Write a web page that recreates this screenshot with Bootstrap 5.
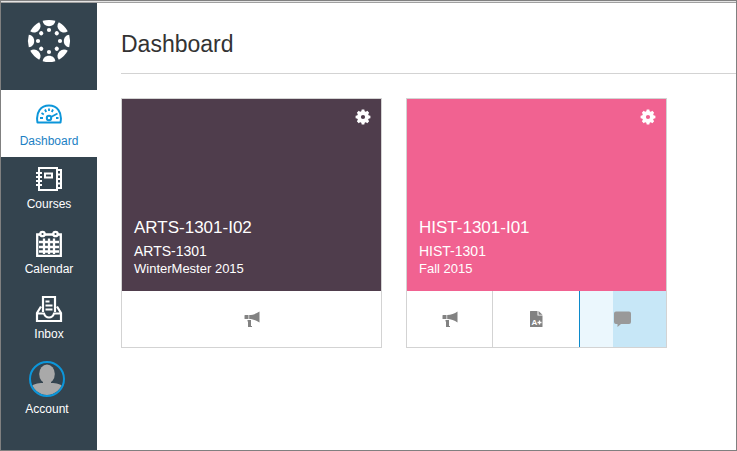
<!DOCTYPE html>
<html lang="en">
<head>
<meta charset="utf-8">
<meta name="viewport" content="width=device-width, initial-scale=1">
<title>Dashboard</title>
<link href="https://cdn.jsdelivr.net/npm/bootstrap@5.3.0/dist/css/bootstrap.min.css" rel="stylesheet">
<style>
body { font-family: "Liberation Sans", Arial, sans-serif; font-size: 12px; line-height: 16px; color: #333; }
.app-frame { border: 1px solid #808080; }
.top-rule { height: 2px; background: #e4e4e4; border-bottom: 1px solid #a0a0a0; }
.side-nav { width: 96px; background: #34444f; }
.brand-link { height: 87px; padding-bottom: 12px; }
.side-link { color: #fff; padding: 8px 0 10px; gap: 3px; }
.side-link:hover { color: #fff; }
.side-link.active { background: #fff; color: #1c7fc4; padding: 10px 0 8px; gap: 5px; }
.account-link { padding: 9px 4px 10px 0; gap: 4px; }
.side-icon { width: 28px; height: 28px; }
.avatar-icon { width: 36px; height: 36px; }
.page-main { padding-left: 24px; }
.page-title { font-size: 23px; line-height: 30px; padding: 26px 0 14px; border-bottom: 1px solid #d3d3d3; margin-bottom: 24px; color: #333; }
.course-list { gap: 24px; }
.course-card { width: 261px; border: 1px solid #d3d3d3; }
.course-hero { height: 192px; padding: 10px 10px 14px 12px; }
.plum { background: #4f3d4c; }
.pink { background: #f16291; }
.course-name { font-size: 17px; line-height: 22px; margin-bottom: 3px; }
.course-code { font-size: 14px; line-height: 18px; }
.course-term { font-size: 13px; line-height: 17px; }
.gear-btn { width: 16px; height: 16px; }
.course-action { height: 56px; color: #828282; }
.course-action + .course-action { border-left: 1px solid #d3d3d3; }
.course-action.current { border-left-color: #0c8acb; color: #999; background: linear-gradient(90deg, #ebf7fd 38%, #c7e7f7 38%); }
</style>
<script src="https://cdn.jsdelivr.net/npm/bootstrap@5.3.0/dist/js/bootstrap.bundle.min.js"></script>
</head>
<body>
<svg class="d-none" aria-hidden="true">
  <symbol id="gear" viewBox="0 0 16 16">
    <circle cx="8" cy="8" r="4" fill="none" stroke="#fff" stroke-width="3.8"/>
    <g fill="#fff"><path id="tooth" d="M6.200 3 6.700.6h2.600L9.800 3zM6.200 13l.5 2.400h2.600l.5-2.400z"/><use href="#tooth" transform="rotate(45 8 8)"/><use href="#tooth" transform="rotate(90 8 8)"/><use href="#tooth" transform="rotate(135 8 8)"/></g>
  </symbol>
  <symbol id="horn" viewBox="0 0 16 16"><path fill="currentColor" d="M.5 4.500q0-.5.5-.5h3.500v4H1q-.5 0-.5-.5zM5.200 4C9 4 12.500 2.500 15.500.5v11C12.500 9.500 9 8 5.200 8zM3.500 9H7v6h1v1H4v-5.500h-.5z"/></symbol>
</svg>
<div class="app-frame d-flex flex-column min-vh-100">
  <div class="top-rule"></div>
  <div class="d-flex flex-grow-1">
    <nav class="side-nav flex-shrink-0 d-flex flex-column" aria-label="Main">
      <a href="#" class="brand-link d-flex align-items-center justify-content-center" aria-label="Home">
        <svg width="44" height="44" viewBox="0 0 44 44" fill="#fff">
          <g id="lobes"><path d="M15.700 1.800Q22 0 28.300 1.800C28 5 25.500 7.200 22 7.200S16 5 15.700 1.800z"/><circle cx="22" cy="11" r="2.100"/></g>
          <use href="#lobes" transform="rotate(45 22 22)"/><use href="#lobes" transform="rotate(90 22 22)"/><use href="#lobes" transform="rotate(135 22 22)"/><use href="#lobes" transform="rotate(180 22 22)"/><use href="#lobes" transform="rotate(225 22 22)"/><use href="#lobes" transform="rotate(270 22 22)"/><use href="#lobes" transform="rotate(315 22 22)"/>
        </svg>
      </a>
      <a href="#" class="side-link active d-flex flex-column align-items-center text-decoration-none" aria-current="page">
        <svg class="side-icon" viewBox="0 0 28 28" fill="none" stroke="#0c96da" stroke-width="2">
          <path d="M2.500 22.500C.5 12 6 5.500 14 5.500S27.500 12 25.500 22.500z" stroke-linejoin="round"/>
          <circle cx="14" cy="18" r="2.200" stroke-width="2"/><path d="M16 17l6.500-3.500M5 18h3M6.500 13l2.300 1.500M10 9.500l1.200 2.500M14 8.500v2.500M18 9.500l-1.200 2.500M21 18h2.500" stroke-width="1.800"/>
        </svg>
        <span>Dashboard</span>
      </a>
      <a href="#" class="side-link d-flex flex-column align-items-center text-decoration-none">
        <svg class="side-icon" viewBox="0 0 28 28" fill="none" stroke="#fff" stroke-width="2">
          <path d="M4 3h18v22H4zM10 8.500h7v4h-7zM22 5h4v18h-4M22 9.500h4M22 14h4M22 18.500h4M1 8h6M1 12h6M1 16h6M1 20h6"/>
        </svg>
        <span>Courses</span>
      </a>
      <a href="#" class="side-link d-flex flex-column align-items-center text-decoration-none">
        <svg class="side-icon" viewBox="0 0 28 28" fill="none" stroke="#fff" stroke-width="2.300">
          <path d="M10 4.500h8M5 4.500H2.200v21.300h23.600V4.500H23M4 12h20M4 17h20M4 21.500h20M9 8.500V24M14 8.500V24M19 8.500V24"/><circle cx="7.500" cy="4" r="2.200"/><circle cx="20.500" cy="4" r="2.200"/>
        </svg>
        <span>Calendar</span>
      </a>
      <a href="#" class="side-link d-flex flex-column align-items-center text-decoration-none">
        <svg class="side-icon" viewBox="0 0 28 28" fill="none" stroke="#fff" stroke-width="2">
          <path d="M8 17V2h12v15M10.500 6.500h4M10.500 10.500h7M10.500 14.500h7M6 11.500 2 18v8h24v-8l-4-6.500M2 18.500h7c1 3 2.500 4 5 4s4-1 5-4h7" stroke-width="2.200"/>
        </svg>
        <span>Inbox</span>
      </a>
      <a href="#" class="side-link account-link d-flex flex-column align-items-center text-decoration-none">
        <svg class="avatar-icon" viewBox="0 0 36 36">
          <clipPath id="face"><circle cx="18" cy="18" r="16"/></clipPath>
          <g fill="#a9a9a9" clip-path="url(#face)"><ellipse cx="18" cy="13" rx="7.800" ry="9.500"/><path d="M14 18h8v4c7 0 12 2 13 5v9H1v-9c1-3 6-5 13-5z"/></g>
          <circle cx="18" cy="18" r="17" fill="none" stroke="#0c96da" stroke-width="2"/>
        </svg>
        <span>Account</span>
      </a>
    </nav>
    <main class="page-main flex-grow-1">
      <h1 class="page-title fw-normal">Dashboard</h1>
      <div class="course-list d-flex flex-wrap">
        <article class="course-card">
          <div class="course-hero plum text-white d-flex flex-column justify-content-between">
            <button type="button" class="gear-btn btn p-0 border-0 d-flex align-self-end" aria-label="Course settings"><svg width="16" height="16"><use href="#gear"/></svg></button>
            <div>
              <h2 class="course-name fw-normal">ARTS-1301-I02</h2>
              <div class="course-code">ARTS-1301</div>
              <div class="course-term">WinterMester 2015</div>
            </div>
          </div>
          <div class="d-flex">
            <a href="#" class="course-action flex-fill d-flex align-items-center justify-content-center" aria-label="Announcements"><svg width="16" height="16"><use href="#horn"/></svg></a>
          </div>
        </article>
        <article class="course-card">
          <div class="course-hero pink text-white d-flex flex-column justify-content-between">
            <button type="button" class="gear-btn btn p-0 border-0 d-flex align-self-end" aria-label="Course settings"><svg width="16" height="16"><use href="#gear"/></svg></button>
            <div>
              <h2 class="course-name fw-normal">HIST-1301-I01</h2>
              <div class="course-code">HIST-1301</div>
              <div class="course-term">Fall 2015</div>
            </div>
          </div>
          <div class="d-flex">
            <a href="#" class="course-action flex-fill d-flex align-items-center justify-content-center" aria-label="Announcements"><svg width="16" height="16"><use href="#horn"/></svg></a>
            <a href="#" class="course-action flex-fill d-flex align-items-center justify-content-center" aria-label="Assignments"><svg width="16" height="16" viewBox="0 0 16 16"><path fill="currentColor" d="M2.500 0H9.500v4.500H14.500V15.500q0 .5-.5.5H2.500q-.5 0-.5-.5V.5q0-.5.5-.5z"/><path fill="currentColor" d="M10.500 0 14.500 3.800h-4z"/><text x="3.500" y="14" fill="#fff" font-size="8" font-weight="bold">A</text><path d="M9.500 11.500h4M11.500 9.500v4" stroke="#fff" stroke-width="1.300"/></svg></a>
            <a href="#" class="course-action current flex-fill d-flex align-items-center justify-content-center" aria-label="Discussions"><svg width="17" height="16" viewBox="0 0 17 16"><path fill="currentColor" d="M2 .5h13q2 0 2 2V11q0 2-2 2H7l-3.500 3V13H2q-2 0-2-2V2.500q0-2 2-2z"/></svg></a>
          </div>
        </article>
      </div>
    </main>
  </div>
</div>
</body>
</html>
